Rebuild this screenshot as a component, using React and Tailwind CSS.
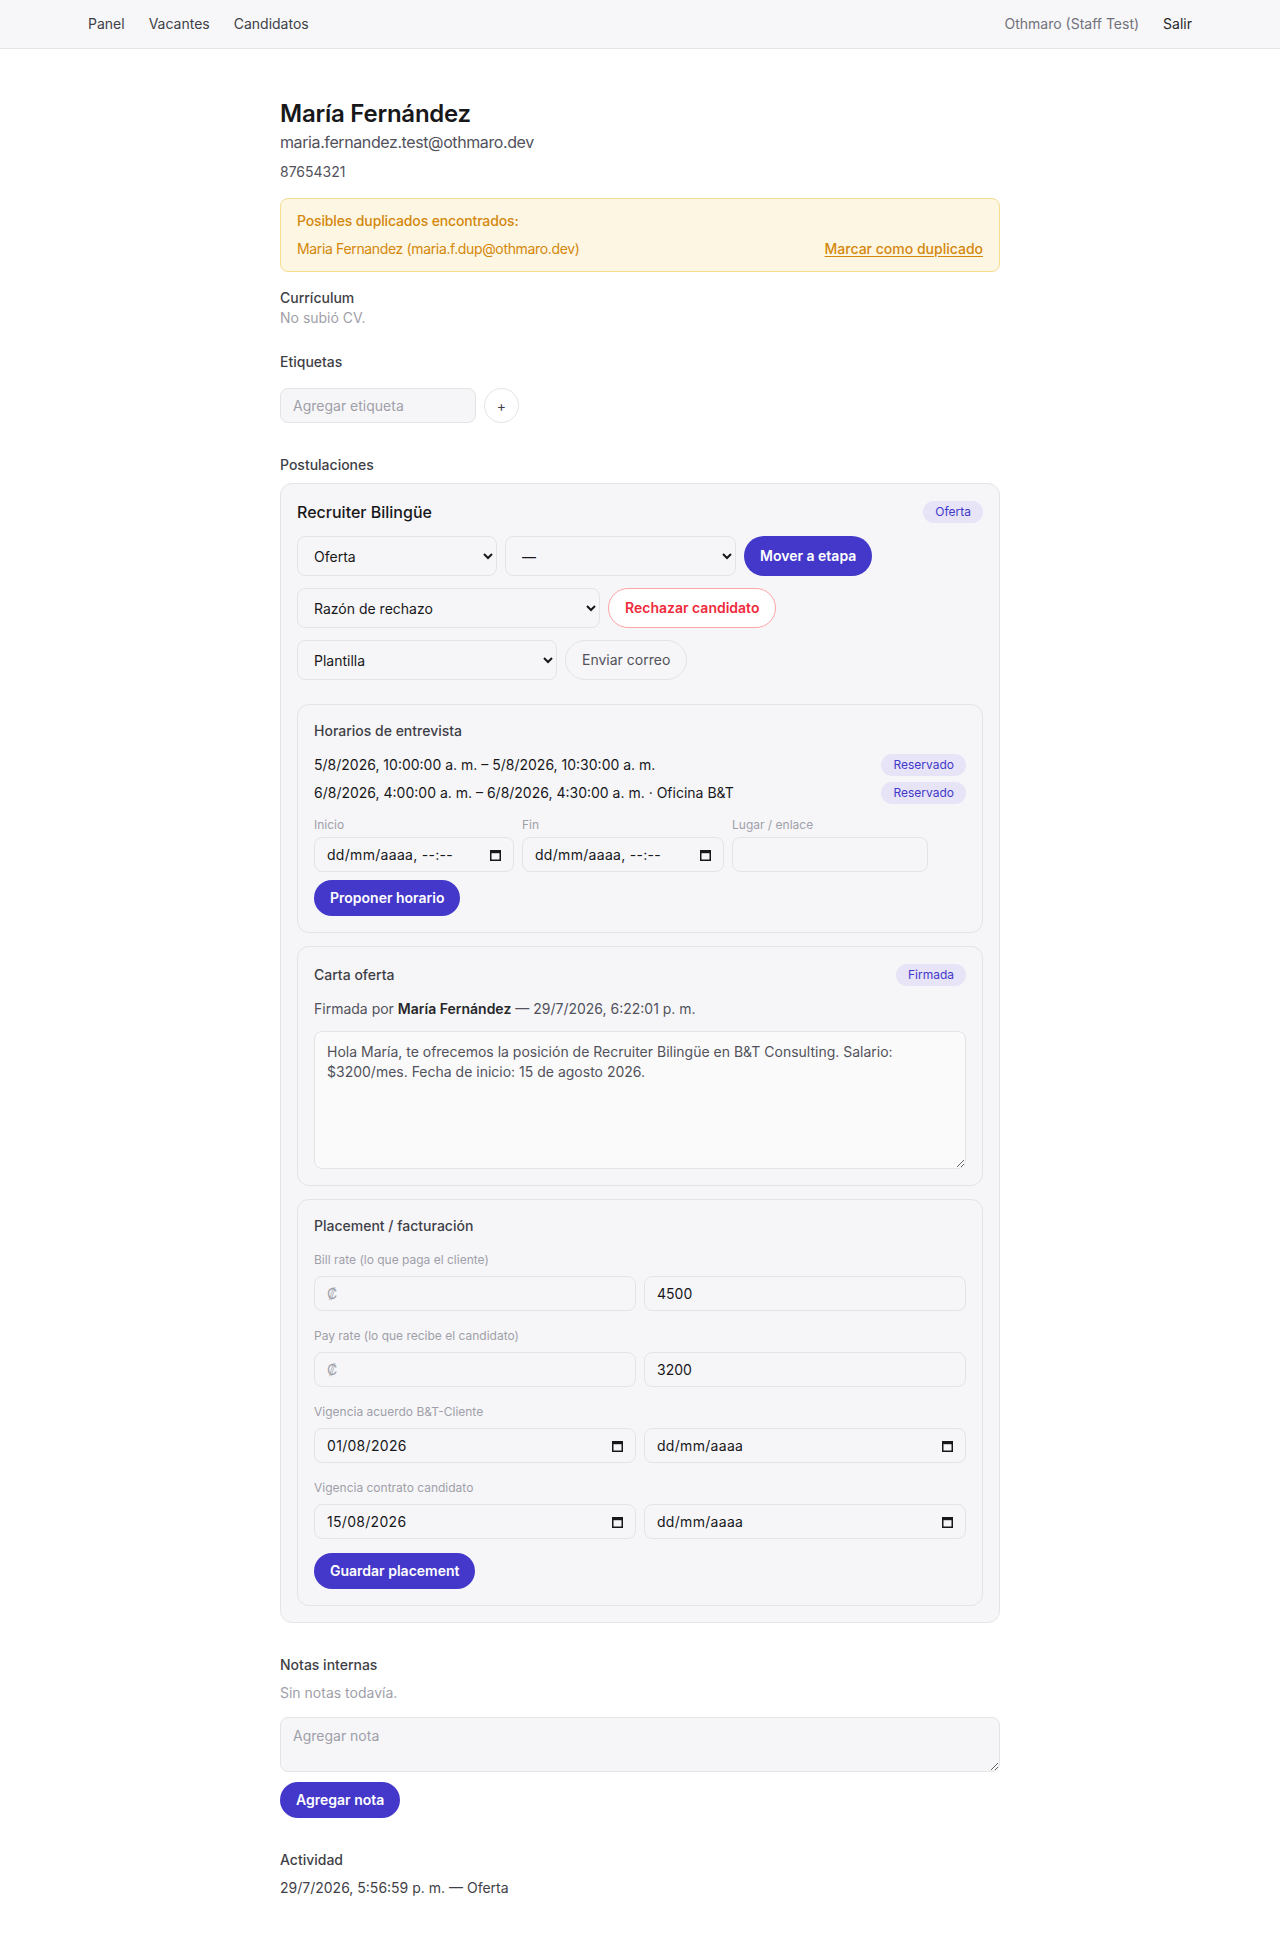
import React from "react";

const fieldBox =
  "h-[35px] rounded-lg border border-[#e4e4e7] bg-[#f6f6f8] px-3 text-sm flex items-center";
const field = `${fieldBox} text-zinc-900`;

function CalendarIcon() {
  return (
    <svg width="11" height="12" viewBox="0 0 11 12" className="shrink-0">
      <rect x="0.75" y="1.75" width="9.5" height="9.5" fill="none" stroke="#18181b" strokeWidth="1.5" />
      <rect x="0" y="1" width="11" height="3.2" fill="#18181b" />
    </svg>
  );
}

function DateField({ value, className = "" }) {
  return (
    <div className={`${field} justify-between ${className}`}>
      <span className="tracking-[0.3px]">{value}</span>
      <CalendarIcon />
    </div>
  );
}

function Select({ value, width }) {
  return (
    <select
      defaultValue={value}
      className={`h-10 ${width} rounded-lg border border-[#e4e4e7] bg-[#f6f6f8] pl-3 pr-2 text-sm text-zinc-900`}
    >
      <option>{value}</option>
    </select>
  );
}

function Badge({ children }) {
  return (
    <span className="inline-flex h-[22px] items-center rounded-full bg-[#e6e4f6] px-3 text-xs text-[#4338ca]">
      {children}
    </span>
  );
}

function PrimaryButton({ children, className = "" }) {
  return (
    <button className={`block h-9 rounded-full bg-[#4338ca] px-4 text-sm font-semibold text-white ${className}`}>
      {children}
    </button>
  );
}

function SubBox({ children, className = "" }) {
  return (
    <div className={`rounded-xl border border-[#e4e4e7] bg-[#f6f6f8] p-4 ${className}`}>{children}</div>
  );
}

function FieldLabel({ children, className = "" }) {
  return <div className={`text-xs text-zinc-400 ${className}`}>{children}</div>;
}

export default function App() {
  return (
    <div className="min-h-screen bg-white font-['Inter','Noto_Sans',sans-serif] text-zinc-900">
      {/* Top navigation */}
      <header className="h-[49px] border-b border-[#e4e4e7] bg-[#f7f7f9]">
        <div className="mx-auto flex h-full max-w-6xl items-center justify-between px-6 text-sm">
          <nav className="flex items-center gap-6 text-zinc-700">
            <a>Panel</a>
            <a>Vacantes</a>
            <a>Candidatos</a>
          </nav>
          <div className="flex items-center gap-6">
            <span className="text-zinc-500">Othmaro (Staff Test)</span>
            <a className="text-zinc-800">Salir</a>
          </div>
        </div>
      </header>

      <main className="mx-auto max-w-3xl px-6 pb-12 pt-[49px]">
        <h1 className="text-2xl font-semibold tracking-[-0.01em] text-zinc-900">María Fernández</h1>
        <div className="text-base tracking-tight text-zinc-600">maria.fernandez.test@othmaro.dev</div>
        <div className="mt-2 text-sm text-zinc-600">87654321</div>

        {/* Duplicate warning */}
        <div className="mt-4 rounded-lg border border-[#f6dd8f] bg-[#fdf6e3] px-4 py-3 text-sm text-[#d4870b]">
          <div className="font-medium tracking-[-0.01em]">Posibles duplicados encontrados:</div>
          <div className="mt-2 flex items-center justify-between">
            <span className="tracking-tight">Maria Fernandez (maria.f.dup@othmaro.dev)</span>
            <a className="font-medium underline underline-offset-2">Marcar como duplicado</a>
          </div>
        </div>

        <section className="mt-4">
          <div className="text-sm font-medium text-zinc-700">Currículum</div>
          <div className="text-sm text-zinc-400">No subió CV.</div>
        </section>

        <section className="mt-6">
          <div className="mb-4 text-sm font-medium text-zinc-700">Etiquetas</div>
          <div className="flex items-center gap-2">
            <input
              placeholder="Agregar etiqueta"
              className="h-[35px] w-[196px] rounded-lg border border-[#e4e4e7] bg-[#f6f6f8] px-3 text-sm placeholder:text-zinc-400"
            />
            <button className="flex h-[35px] w-[35px] items-center justify-center rounded-full border border-[#e4e4e7] bg-white text-sm text-zinc-700">
              +
            </button>
          </div>
        </section>

        <section className="mt-8">
          <div className="mb-2 text-sm font-medium text-zinc-700">Postulaciones</div>
          <div className="rounded-xl border border-[#e4e4e7] bg-[#f6f6f8] p-4">
            <div className="flex items-center justify-between">
              <div className="text-base font-medium text-zinc-900">Recruiter Bilingüe</div>
              <Badge>Oferta</Badge>
            </div>

            <div className="mt-3 flex flex-col gap-3">
              <div className="flex items-center gap-2">
                <Select value="Oferta" width="w-[200px]" />
                <Select value="—" width="w-[231px]" />
                <PrimaryButton className="h-10">Mover a etapa</PrimaryButton>
              </div>
              <div className="flex items-center gap-2">
                <Select value="Razón de rechazo" width="w-[303px]" />
                <button className="h-10 rounded-full border border-[#fca5a5] bg-white px-4 text-sm font-semibold text-[#ef2b3b]">
                  Rechazar candidato
                </button>
              </div>
              <div className="flex items-center gap-2">
                <Select value="Plantilla" width="w-[260px]" />
                <button className="h-10 rounded-full border border-[#e4e4e7] px-4 text-sm text-zinc-600">
                  Enviar correo
                </button>
              </div>
            </div>

            {/* Interview slots */}
            <SubBox className="mt-6">
              <div className="text-sm font-medium text-zinc-700">Horarios de entrevista</div>
              <div className="mt-3 flex flex-col gap-1 text-sm text-zinc-900">
                <div className="flex h-6 items-center justify-between">
                  <span>5/8/2026, 10:00:00 a. m. – 5/8/2026, 10:30:00 a. m.</span>
                  <Badge>Reservado</Badge>
                </div>
                <div className="flex h-6 items-center justify-between">
                  <span>6/8/2026, 4:00:00 a. m. – 6/8/2026, 4:30:00 a. m. · Oficina B&amp;T</span>
                  <Badge>Reservado</Badge>
                </div>
              </div>
              <div className="mt-3 flex items-end gap-2">
                <div>
                  <FieldLabel className="mb-1">Inicio</FieldLabel>
                  <DateField value="dd/mm/aaaa, --:--" className="w-[200px]" />
                </div>
                <div>
                  <FieldLabel className="mb-1">Fin</FieldLabel>
                  <DateField value="dd/mm/aaaa, --:--" className="w-[202px]" />
                </div>
                <div>
                  <FieldLabel className="mb-1">Lugar / enlace</FieldLabel>
                  <input className="block h-[35px] w-[196px] rounded-lg border border-[#e4e4e7] bg-[#f6f6f8] px-3 text-sm" />
                </div>
              </div>
              <PrimaryButton className="mt-2">Proponer horario</PrimaryButton>
            </SubBox>

            {/* Offer letter */}
            <SubBox className="mt-[13px]">
              <div className="flex h-6 items-center justify-between">
                <div className="text-sm font-medium text-zinc-700">Carta oferta</div>
                <Badge>Firmada</Badge>
              </div>
              <div className="mt-3 text-sm text-zinc-600">
                Firmada por <span className="font-semibold text-zinc-800">María Fernández</span> — 29/7/2026,
                6:22:01 p. m.
              </div>
              <textarea
                readOnly
                className="mt-3 block h-[138px] w-full resize-y rounded-lg border border-[#e4e4e7] bg-[#fafafa] px-3 py-2.5 text-sm leading-5 text-zinc-600"
                defaultValue="Hola María, te ofrecemos la posición de Recruiter Bilingüe en B&T Consulting. Salario: $3200/mes. Fecha de inicio: 15 de agosto 2026."
              />
            </SubBox>

            {/* Placement and billing */}
            <SubBox className="mt-[13px]">
              <div className="text-sm font-medium text-zinc-700">Placement / facturación</div>
              <div className="mt-4 flex flex-col gap-[17px]">
                <div>
                  <FieldLabel className="mb-2">Bill rate (lo que paga el cliente)</FieldLabel>
                  <div className="grid grid-cols-2 gap-2">
                    <div className={`${fieldBox} text-zinc-400`}>₡</div>
                    <div className={field}>4500</div>
                  </div>
                </div>
                <div>
                  <FieldLabel className="mb-2">Pay rate (lo que recibe el candidato)</FieldLabel>
                  <div className="grid grid-cols-2 gap-2">
                    <div className={`${fieldBox} text-zinc-400`}>₡</div>
                    <div className={field}>3200</div>
                  </div>
                </div>
                <div>
                  <FieldLabel className="mb-2">Vigencia acuerdo B&amp;T-Cliente</FieldLabel>
                  <div className="grid grid-cols-2 gap-2">
                    <DateField value="01/08/2026" />
                    <DateField value="dd/mm/aaaa" />
                  </div>
                </div>
                <div>
                  <FieldLabel className="mb-2">Vigencia contrato candidato</FieldLabel>
                  <div className="grid grid-cols-2 gap-2">
                    <DateField value="15/08/2026" />
                    <DateField value="dd/mm/aaaa" />
                  </div>
                </div>
              </div>
              <PrimaryButton className="mt-[14px]">Guardar placement</PrimaryButton>
            </SubBox>
          </div>
        </section>

        <section className="mt-8">
          <div className="mb-2 text-sm font-medium text-zinc-700">Notas internas</div>
          <div className="text-sm text-zinc-400">Sin notas todavía.</div>
          <textarea
            placeholder="Agregar nota"
            className="mt-3.5 block h-[55px] w-full resize-y rounded-lg border border-[#e4e4e7] bg-[#f6f6f8] px-3 py-2 text-sm placeholder:text-zinc-400"
          />
          <PrimaryButton className="mt-2.5">Agregar nota</PrimaryButton>
        </section>

        <section className="mt-8">
          <div className="mb-2 text-sm font-medium text-zinc-700">Actividad</div>
          <div className="text-sm text-zinc-700">29/7/2026, 5:56:59 p. m. — Oferta</div>
        </section>
      </main>
    </div>
  );
}
